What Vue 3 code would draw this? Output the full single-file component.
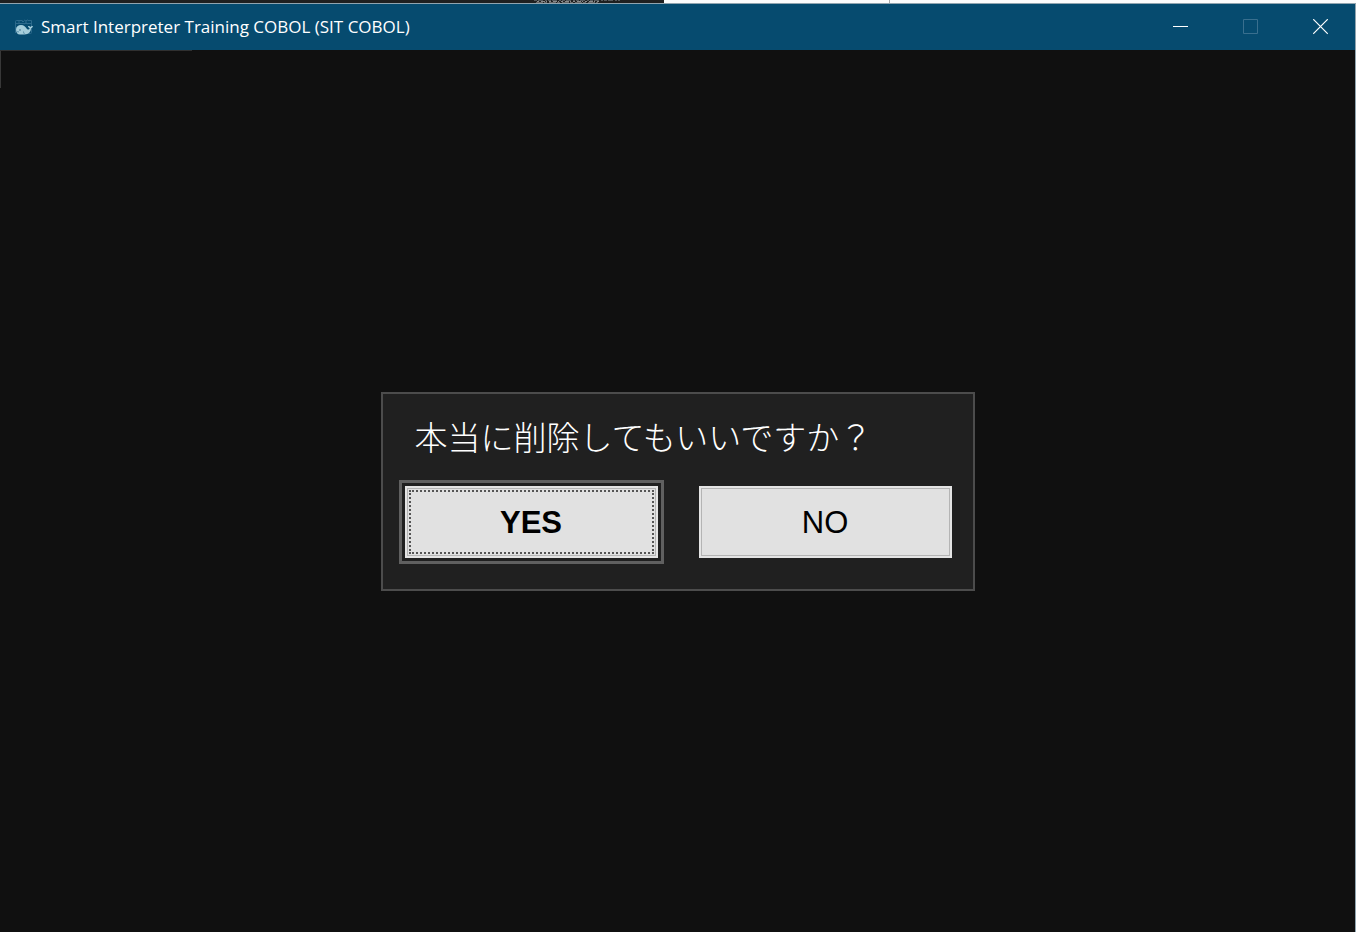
<script setup>
import { ref } from 'vue'

const title = 'Smart Interpreter Training COBOL (SIT COBOL)'
const message = '本当に削除してもいいですか？'
const choices = ref([
  { label: 'YES', focused: true },
  { label: 'NO', focused: false },
])
</script>

<template>
  <div class="desktop">
    <div class="behind" aria-hidden="true">
      <div class="behind-dark">
        <svg class="behind-marks" width="90" height="3" viewBox="0 0 90 3">
          <path d="M2 .5h86" stroke="#55595c" stroke-dasharray="3 1 5 2 2 1" />
          <path d="M5 1.5h62" stroke="#8a8a8a" stroke-dasharray="2 2 4 1 1 2" />
          <path d="M4 2.5h62" stroke="#666" stroke-dasharray="7 1 3 2" />
        </svg>
      </div>
      <div class="behind-light"></div>
      <div class="behind-light second"></div>
    </div>
    <div class="window">
      <header class="titlebar">
        <svg class="logo" width="18" height="18" viewBox="0 0 18 18" aria-hidden="true">
          <g fill="none" stroke="#2c6a8c">
            <path d="M.5 15V3.5q0-1 1-1h6M12.500 2.500h4v12q0 1-1 1h-2M.5 5.500h16M4 3v2M7 3.500h2" />
            <path d="M9 2l2 1 1.500-1.500M11 3v2l-2 1M11 5l2 1" />
          </g>
          <path d="M1 11.500C1 8.500 3.200 7 6 7c3 0 4.500 2 6 4 1.200 1 2.300.8 2.700-.8C13.500 9.800 13 9 13 8c1.200-.2 2 .2 2.500 1 .4-.9 1.200-1.300 2.400-1-.1 1.300-.8 2-1.900 2.300-.1 3.500-2.300 6.200-6.500 6.200H5C2.500 16.500 1 14.500 1 11.500z" fill="#a5cedb" />
          <path d="M2 13.500q1 .7 2 .3M8.500 13.500q0 1.500 1 2.500" fill="none" stroke="#2c6a8c" stroke-width=".6" />
          <circle cx="5" cy="12" r=".7" fill="#1c5475" />
        </svg>
        <h1>{{ title }}</h1>
        <div class="controls">
          <button type="button" aria-label="Minimize">
            <svg width="15" height="16" viewBox="0 0 15 16"><path d="M0 7.500h15" stroke="#fff" /></svg>
          </button>
          <button type="button" aria-label="Maximize" disabled>
            <svg width="15" height="16" viewBox="0 0 15 16"><path d="M.5.5h14v14H.5z" fill="none" stroke="#396f8e" /></svg>
          </button>
          <button type="button" aria-label="Close">
            <svg width="15" height="16" viewBox="0 0 15 16"><path d="M.2.2l14.600 14.600M14.800.2L.2 14.800" stroke="#fff" stroke-width="1.200" /></svg>
          </button>
        </div>
      </header>
      <main class="client">
        <div class="corner" aria-hidden="true"></div>
        <section class="dialog" role="dialog" aria-labelledby="message">
          <p id="message">{{ message }}</p>
          <div class="choices">
            <button
              v-for="c in choices"
              :key="c.label"
              type="button"
              class="choice"
              :class="{ focused: c.focused }"
            >
              <span>{{ c.label }}</span>
            </button>
          </div>
        </section>
      </main>
    </div>
  </div>
</template>

<style>
body {
  margin: 0;
  background: #101010;
}
</style>

<style scoped>
.desktop {
  display: flex;
  flex-direction: column;
  min-height: 100vh;
  font-family: "Noto Sans", "Noto Sans CJK JP", sans-serif;
}
.behind {
  display: flex;
  height: 3px;
  background: #fcfcfc;
}
.behind-dark {
  flex: 0 0 49%;
  display: flex;
  justify-content: flex-end;
  background: #202020;
}
.behind-marks {
  margin-right: 42px;
}
.behind-light {
  flex: 0 0 225px;
}
.behind-light.second {
  flex: 1;
  border-left: 1px solid #a8a8a8;
}
.window {
  flex: 1;
  display: flex;
  flex-direction: column;
  border-top: 1px solid #91a5b0;
  border-right: 1px solid #91a5b0;
  background: #101010;
}
.titlebar {
  display: flex;
  align-items: center;
  height: 46px;
  padding-left: 15px;
  background: #064b6f;
  color: #fff;
}
.logo {
  margin-right: 8px;
}
h1 {
  flex: 1;
  margin: 0;
  font-family: "Open Sans", "Noto Sans", sans-serif;
  font-size: 17px;
  font-weight: 400;
  line-height: 24px;
}
.controls {
  display: flex;
  align-self: stretch;
}
.controls button {
  display: flex;
  align-items: center;
  justify-content: center;
  width: 70px;
  padding: 0;
  border: 0;
  background: none;
}
.client {
  position: relative;
  flex: 1;
  display: flex;
  align-items: center;
  justify-content: center;
  background: #101010;
}
.corner {
  position: absolute;
  top: 0;
  left: 0;
  width: 192px;
  height: 38px;
  background:
    linear-gradient(#303030, #303030) top / 100% 1px no-repeat,
    linear-gradient(#383838, #383838) left / 1px 100% no-repeat;
}
.dialog {
  padding: 18px 21px 31px 22px;
  border: 2px solid #4c4c4c;
  background: #202020;
}
#message {
  margin: 0 0 26px 10px;
  color: #fff;
  font-family: "Noto Sans CJK JP", sans-serif;
  font-size: 33px;
  font-weight: 300;
  line-height: 48px;
}
.choices {
  display: flex;
  gap: 41px;
}
.choice {
  width: 253px;
  height: 72px;
  padding: 2px;
  border: 2px solid #e4e4e4;
  box-shadow: inset 0 0 0 1px #b4b4b4;
  background: #e1e1e1;
  color: #000;
  font-family: "Liberation Sans", Arial, sans-serif;
  font-size: 31px;
  line-height: 36px;
}
.choice span {
  display: flex;
  align-items: center;
  justify-content: center;
  box-sizing: border-box;
  height: 100%;
  padding-top: 2px;
}
.focused {
  outline: 3px solid #606060;
  outline-offset: 3px;
  font-weight: 700;
}
.focused span {
  border: 2px dotted #555;
}
</style>
